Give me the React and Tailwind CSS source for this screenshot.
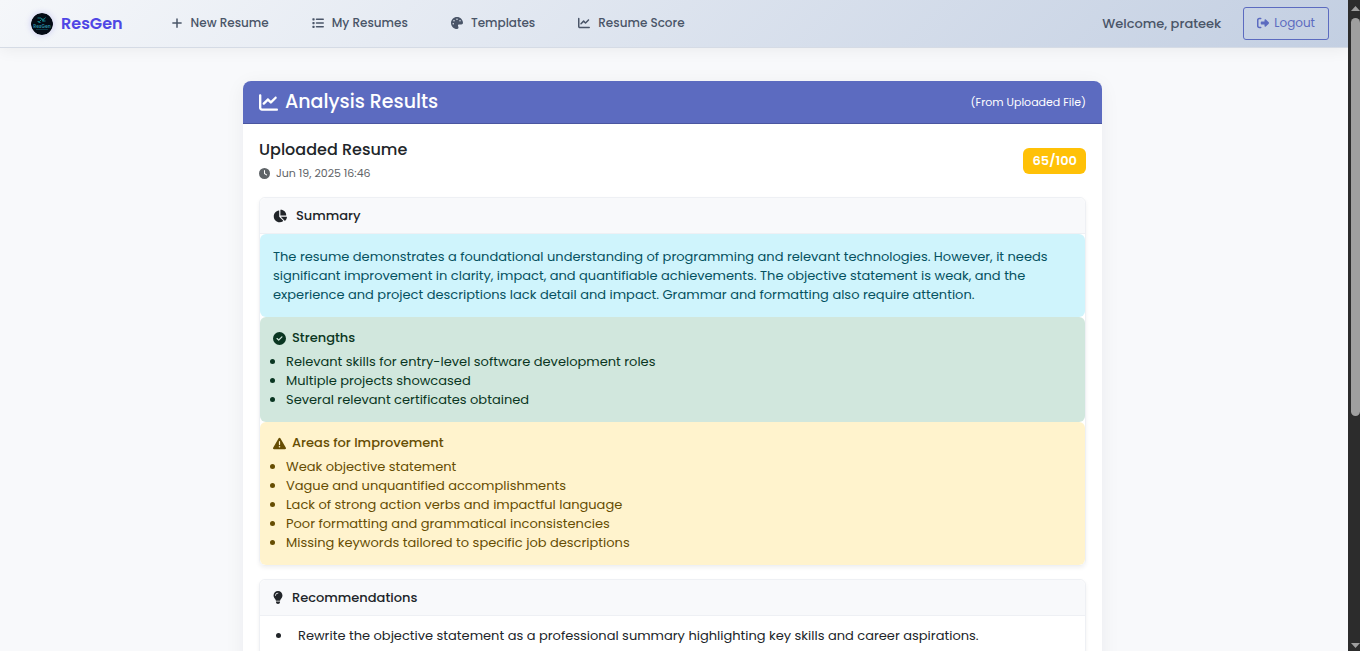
import {
  FaPlus,
  FaList,
  FaPalette,
  FaChartLine,
  FaRightFromBracket,
  FaClock,
  FaChartPie,
  FaCircleCheck,
  FaTriangleExclamation,
  FaLightbulb,
} from "react-icons/fa6";

const links = [
  { label: "New Resume", Icon: FaPlus },
  { label: "My Resumes", Icon: FaList },
  { label: "Templates", Icon: FaPalette },
  { label: "Resume Score", Icon: FaChartLine },
];

const strengths = [
  "Relevant skills for entry-level software development roles",
  "Multiple projects showcased",
  "Several relevant certificates obtained",
];

const improvements = [
  "Weak objective statement",
  "Vague and unquantified accomplishments",
  "Lack of strong action verbs and impactful language",
  "Poor formatting and grammatical inconsistencies",
  "Missing keywords tailored to specific job descriptions",
];

function Logo() {
  return (
    <svg
      viewBox="0 0 22 22"
      className="size-[22px] rounded-full shadow-[0_0_6px_rgba(79,70,229,0.25)]"
      aria-hidden="true"
    >
      <circle cx="11" cy="11" r="11" fill="#040b16" />
      <path
        d="M6.500 5h3.500l2 2.500M14.500 4.500l-3 3.500h3M6.500 8.500h2l2-2M12 5.500v3M7.500 9.500h2"
        fill="none"
        stroke="#17808a"
      />
      <text x="11" y="14.500" textAnchor="middle" fontSize="4.500" fill="#2b8fa5">
        ResGen
      </text>
      <path d="M5 16.500h12" stroke="#0d3644" />
    </svg>
  );
}

function Points({ title, Icon, items, className }) {
  return (
    <div className={`rounded-md p-[13px] ${className}`}>
      <h4 className="flex items-center gap-1.5 leading-4 font-medium">
        <Icon />
        {title}
      </h4>
      <ul className="mt-1.5 list-disc pl-[13px] leading-[19px]">
        {items.map((item) => (
          <li key={item}>{item}</li>
        ))}
      </ul>
    </div>
  );
}

function ScrollTrack() {
  return (
    <div className="flex w-3 shrink-0 flex-col items-end bg-[#2c2c2c] pt-1.5 pb-[3px]" aria-hidden="true">
      <svg viewBox="0 0 9 5" className="h-[5px] w-[9px] shrink-0" fill="#9f9f9f">
        <path d="M4.500 0L9 5H0z" />
      </svg>
      <div className="mt-[7px] h-[62%] w-[9px] rounded-full bg-[#9f9f9f]" />
      <svg viewBox="0 0 9 5" className="mt-auto h-[5px] w-[9px] shrink-0" fill="#9f9f9f">
        <path d="M0 0h9L4.500 5z" />
      </svg>
    </div>
  );
}

export default function App() {
  return (
    <div className="flex h-screen bg-[#f8f9fb] font-[Poppins,Inter,sans-serif] text-[13px] text-[#212529]">
      <div className="flex min-w-0 flex-1 flex-col overflow-hidden">
        <header className="z-10 flex h-12 shrink-0 items-center border-b border-[#d5dbe5] bg-linear-135 from-[#f5f7fa] to-[#c3cfe2] pr-[19px] pl-[31px] shadow-[0_2px_15px_rgba(0,0,0,0.06)]">
          <a href="#home" className="flex items-center gap-2 text-base font-semibold text-[#4f46e5]">
            <Logo />
            ResGen
          </a>
          <nav className="ml-12 flex gap-[43px] pb-0.5 text-xs font-medium text-[#4a5568]">
            {links.map(({ label, Icon }) => (
              <a key={label} href="#nav" className="flex items-center gap-2">
                <Icon />
                {label}
              </a>
            ))}
          </nav>
          <div className="ml-auto flex items-center gap-[22px]">
            <span className="font-medium text-[#4a5568]">Welcome, prateek</span>
            <button
              type="button"
              className="flex h-[33px] items-center gap-[5px] rounded-[3px] border border-[#5c6bc0] px-[13px] pb-0.5 text-xs text-[#5c6bc0]"
            >
              <FaRightFromBracket />
              Logout
            </button>
          </div>
        </header>

        <main className="flex justify-center pt-[33px] pr-[3px]">
          <section className="w-full max-w-[859px] rounded-t-lg bg-white pb-8 shadow-[0_4px_20px_rgba(0,0,50,0.06)]">
            <div className="flex h-[43px] items-center justify-between rounded-t-lg border-b border-[#4a56a0] bg-[#5c6bc0] px-4 text-white">
              <h1 className="flex items-center gap-[7px] text-[19px] font-medium">
                <FaChartLine />
                Analysis Results
              </h1>
              <span className="text-[11px]">(From Uploaded File)</span>
            </div>
            <div className="px-4 pt-4">
              <div className="flex items-center justify-between">
                <div>
                  <h2 className="text-base leading-5 font-medium">Uploaded Resume</h2>
                  <p className="mt-[5px] flex items-center gap-1.5 text-[11px] leading-4 text-[#5f6468]">
                    <FaClock />
                    Jun 19, 2025 16:46
                  </p>
                </div>
                <span className="flex h-[26px] items-center rounded-md bg-[#ffc107] px-[9px] font-semibold text-white">
                  65/100
                </span>
              </div>

              <section className="mt-4 rounded-md border border-[#eef0f4] shadow-[0_2px_4px_rgba(0,0,0,0.06)]">
                <h3 className="flex h-[36px] items-center gap-[9px] rounded-t-md border-b border-[#eef0f4] bg-[#f8f9fb] px-[13px] font-medium">
                  <FaChartPie className="size-[14px]" />
                  Summary
                </h3>
                <p className="rounded-md bg-[#cff4fc] p-[13px] leading-[19px] text-[#055160]">
                  The resume demonstrates a foundational understanding of programming and relevant technologies.
                  However, it needs significant improvement in clarity, impact, and quantifiable achievements. The
                  objective statement is weak, and the experience and project descriptions lack detail and impact.
                  Grammar and formatting also require attention.
                </p>
                <Points
                  title="Strengths"
                  Icon={FaCircleCheck}
                  items={strengths}
                  className="bg-[#d1e7dd] text-[#0a3622]"
                />
                <Points
                  title="Areas for Improvement"
                  Icon={FaTriangleExclamation}
                  items={improvements}
                  className="bg-[#fff3cd] text-[#664d03]"
                />
              </section>

              <section className="mt-[13px] rounded-md border border-[#eef0f4] shadow-[0_2px_4px_rgba(0,0,0,0.06)]">
                <h3 className="flex h-[36px] items-center gap-[9px] rounded-t-md border-b border-[#eef0f4] bg-[#f8f9fb] px-[13px] font-medium">
                  <FaLightbulb className="h-[13px] w-[10px]" />
                  Recommendations
                </h3>
                <ul className="list-disc py-2.5 pr-3 pl-[32px] leading-[19px]">
                  <li className="pl-1.5">
                    Rewrite the objective statement as a professional summary highlighting key skills and career
                    aspirations.
                  </li>
                </ul>
              </section>
            </div>
          </section>
        </main>
      </div>
      <ScrollTrack />
    </div>
  );
}
